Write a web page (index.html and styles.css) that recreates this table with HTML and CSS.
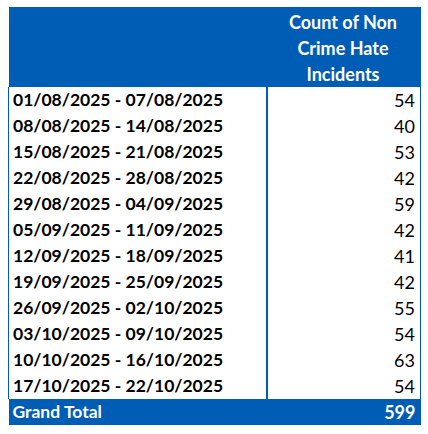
FILE: index.html
```html
<!DOCTYPE html>
<html>
<head>
<meta charset="utf-8">
<link rel="stylesheet" href="styles.css">
</head>
<body>
<table class="pivot">
  <thead>
    <tr class="head">
      <th class="c1"></th>
      <th class="c2">Count of Non<br>Crime Hate<br>Incidents</th>
    </tr>
  </thead>
  <tbody>
    <tr><td class="c1">01/08/2025 - 07/08/2025</td><td class="c2">54</td></tr>
    <tr><td class="c1">08/08/2025 - 14/08/2025</td><td class="c2">40</td></tr>
    <tr><td class="c1">15/08/2025 - 21/08/2025</td><td class="c2">53</td></tr>
    <tr><td class="c1">22/08/2025 - 28/08/2025</td><td class="c2">42</td></tr>
    <tr><td class="c1">29/08/2025 - 04/09/2025</td><td class="c2">59</td></tr>
    <tr><td class="c1">05/09/2025 - 11/09/2025</td><td class="c2">42</td></tr>
    <tr><td class="c1">12/09/2025 - 18/09/2025</td><td class="c2">41</td></tr>
    <tr><td class="c1">19/09/2025 - 25/09/2025</td><td class="c2">42</td></tr>
    <tr><td class="c1">26/09/2025 - 02/10/2025</td><td class="c2">55</td></tr>
    <tr><td class="c1">03/10/2025 - 09/10/2025</td><td class="c2">54</td></tr>
    <tr><td class="c1">10/10/2025 - 16/10/2025</td><td class="c2">63</td></tr>
    <tr><td class="c1">17/10/2025 - 22/10/2025</td><td class="c2">54</td></tr>
  </tbody>
  <tfoot>
    <tr class="total"><td class="c1">Grand Total</td><td class="c2">599</td></tr>
  </tfoot>
</table>
</body>
</html>
```
FILE: styles.css
```css
html, body {
  margin: 0;
  padding: 0;
  background: #ffffff;
}
body {
  padding: 7px 0 0 8px;
  font-family: Lato, "Open Sans", sans-serif;
}
.pivot {
  border-collapse: collapse;
  width: 412px;
  table-layout: fixed;
  font-size: 18px;
}
.pivot td, .pivot th {
  padding: 0 5px 0 4px;
  height: 26px;
  line-height: 26px;
  box-sizing: border-box;
}
.pivot .c1 { width: 258px; text-align: left; font-weight: 700; color: #000; font-size: 17.5px; }
.pivot .c2 { width: 154px; text-align: right; font-weight: 400; color: #000; }
.head th {
  background: #005DB5;
  color: #fff;
  height: 80px;
  line-height: 26px;
  vertical-align: top;
  padding-top: 2px;
}
.head th.c2 {
  text-align: center;
  font-weight: 700;
  color: #fff;
}
tbody td.c1 { border-left: 1px solid #005DB5; border-right: 2px solid #005DB5; }
tbody td.c2 { border-right: 1px solid #005DB5; }
.total td {
  background: #005DB5;
  color: #fff !important;
  font-weight: 700 !important;
  font-size: 18px;
}
```
